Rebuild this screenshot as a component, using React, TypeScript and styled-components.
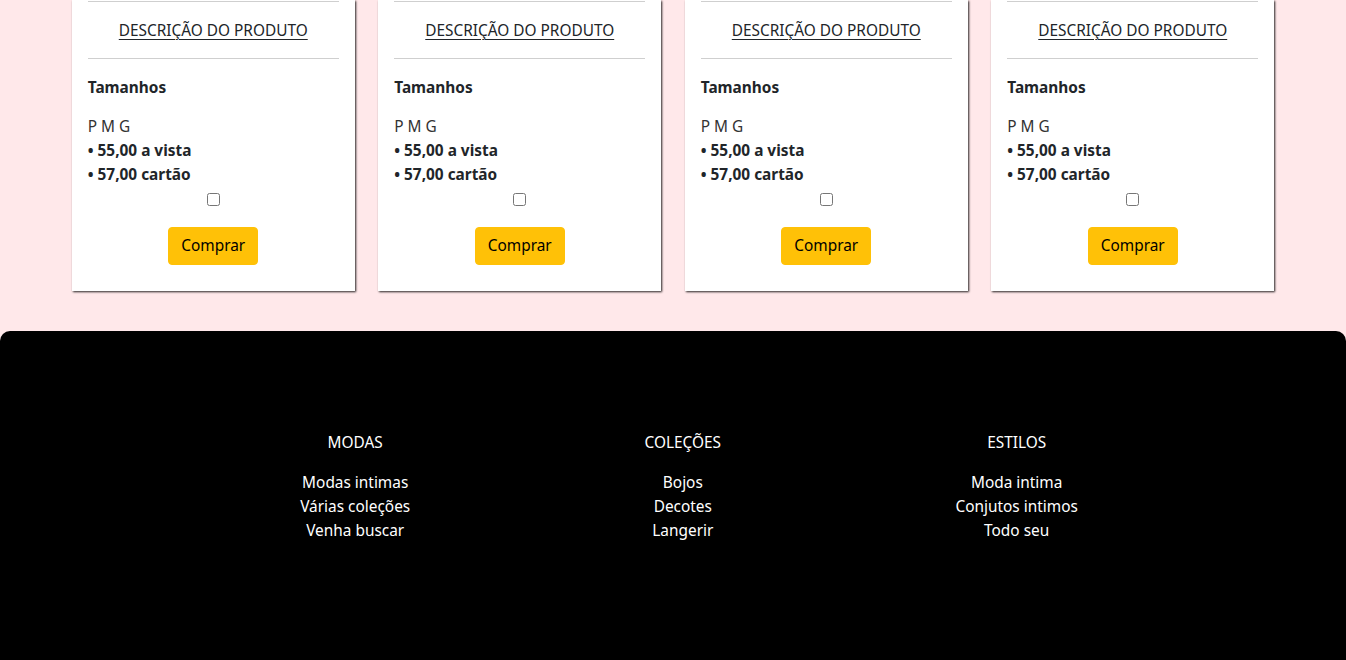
import React from "react";
import styled, { createGlobalStyle } from "styled-components";

const Global = createGlobalStyle`
  html, body { margin: 0; padding: 0; }
  body {
    background: #ffe8ea;
    font-family: "Noto Sans", "Open Sans", sans-serif;
    font-size: 15.4px;
    line-height: 24px;
    color: #212529;
    overflow: hidden;
  }
`;

const Cards = styled.section`
  display: flex;
  justify-content: center;
  gap: 23.5px;
  margin-bottom: 40px;
`;

const Card = styled.article`
  width: 283px;
  box-sizing: border-box;
  background: #fff;
  padding: 1px 16px 26px;
  box-shadow: 1px 1px 2px rgba(0, 0, 0, 0.85);
  display: flex;
  flex-direction: column;
`;

const Rule = styled.hr`
  margin: 0;
  border: 0;
  border-top: 1px solid #cfcfcf;
`;

const DescLink = styled.a`
  display: block;
  margin: 16px 0;
  padding-top: 1px;
  height: 23px;
  text-align: center;
  color: #212529;
  text-decoration: underline;
  text-underline-offset: 3px;
  text-decoration-thickness: 1px;
  cursor: pointer;
`;

const SizesTitle = styled.h6`
  margin: 16px 0 16px;
  padding-top: 1px;
  height: 23px;
  font-size: 15.4px;
  line-height: 24px;
  font-weight: 700;
`;

const Sizes = styled.p`
  margin: 0;
  color: #333;
`;

const Price = styled.p`
  margin: 0;
  font-weight: 700;
`;

const CheckRow = styled.div`
  display: flex;
  justify-content: center;
  align-items: center;
  height: 24px;
  margin-bottom: 16px;
`;

const Check = styled.input`
  width: 13px;
  height: 13px;
  margin: 0;
`;

const BuyButton = styled.button`
  align-self: center;
  background: #ffc107;
  color: #000;
  border: 1px solid #ffc107;
  border-radius: 4px;
  padding: 6px 12px;
  font-family: inherit;
  font-size: 15.4px;
  line-height: 24px;
  cursor: pointer;
`;

const Footer = styled.footer`
  background: #000;
  border-radius: 10px 10px 0 0;
  padding: 100px 0 140px;
  display: flex;
  justify-content: center;
`;

const FooterNav = styled.nav`
  width: 1012px;
  display: flex;
  justify-content: space-around;
`;

const FooterCol = styled.ul`
  list-style: none;
  margin: 0;
  padding: 0 0 0 32px;
  text-align: center;
  color: #fff;
`;

const FooterHead = styled.li`
  margin-bottom: 16px;
`;

const FooterItem = styled.li``;

const columns = [
  { title: "MODAS", items: ["Modas intimas", "Várias coleções", "Venha buscar"] },
  { title: "COLEÇÕES", items: ["Bojos", "Decotes", "Langerir"] },
  { title: "ESTILOS", items: ["Moda intima", "Conjutos intimos", "Todo seu"] },
];

export default function App() {
  return (
    <>
      <Global />
      <Cards>
        {[0, 1, 2, 3].map((i) => (
          <Card key={i}>
            <Rule />
            <DescLink>DESCRIÇÃO DO PRODUTO</DescLink>
            <Rule />
            <SizesTitle>Tamanhos</SizesTitle>
            <Sizes>P M G</Sizes>
            <Price>• 55,00 a vista</Price>
            <Price>• 57,00 cartão</Price>
            <CheckRow>
              <Check type="checkbox" />
            </CheckRow>
            <BuyButton>Comprar</BuyButton>
          </Card>
        ))}
      </Cards>
      <Footer>
        <FooterNav>
          {columns.map((c) => (
            <FooterCol key={c.title}>
              <FooterHead>{c.title}</FooterHead>
              {c.items.map((it) => (
                <FooterItem key={it}>{it}</FooterItem>
              ))}
            </FooterCol>
          ))}
        </FooterNav>
      </Footer>
    </>
  );
}
